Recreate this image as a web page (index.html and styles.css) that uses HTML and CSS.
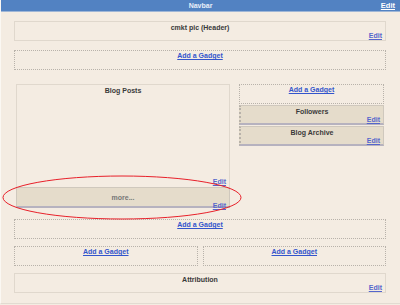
FILE: index.html
```html
<!DOCTYPE html>
<html>
<head>
<meta charset="utf-8">
<link rel="stylesheet" href="styles.css">
<title>Layout</title>
</head>
<body>
<div class="page">
  <div class="navbar"><span class="navtitle">Navbar</span><a class="navedit" href="#">Edit</a></div>
  <div class="main">
    <div class="widget header"><span class="wtitle">cmkt pic (Header)</span><a class="edit" href="#">Edit</a></div>
    <div class="add wide"><a href="#">Add a Gadget</a></div>
    <div class="cols">
      <div class="leftcol">
        <div class="widget posts"><span class="wtitle">Blog Posts</span><a class="edit" href="#">Edit</a></div>
        <div class="widget filled more"><span class="wtitle muted">more...</span><a class="edit" href="#">Edit</a></div>
      </div>
      <div class="rightcol">
        <div class="add"><a href="#">Add a Gadget</a></div>
        <div class="widget filled side"><span class="wtitle">Followers</span><a class="edit" href="#">Edit</a></div>
        <div class="widget filled side"><span class="wtitle">Blog Archive</span><a class="edit" href="#">Edit</a></div>
      </div>
    </div>
    <div class="add wide after"><a href="#">Add a Gadget</a></div>
    <div class="pair">
      <div class="add"><a href="#">Add a Gadget</a></div>
      <div class="add"><a href="#">Add a Gadget</a></div>
    </div>
    <div class="widget attrib"><span class="wtitle">Attribution</span><a class="edit" href="#">Edit</a></div>
  </div>
</div>
<svg class="circle" width="400" height="305" viewBox="0 0 400 305">
  <ellipse cx="122" cy="197.5" rx="119" ry="21.5" fill="none" stroke="#e8202a" stroke-width="1"/>
</svg>
</body>
</html>
```
FILE: styles.css
```css
body {
    margin: 0;
    background: #f4ece2;
    font-family: "Liberation Sans", Arial, sans-serif;
    font-size: 7px;
    font-weight: bold;
    color: #444;
}

a {
    color: #3355cc;
    text-decoration: underline;
}

.page {
    width: 399px;
    height: 303px;
    border-left: 1px solid #fbf8f3;
    border-bottom: 1px solid #e2dbd1;
    position: relative;
}

.navbar {
    height: 11px;
    background: #5282c2;
    border-bottom: 1px solid #9fb6d6;
    display: flex;
    align-items: center;
    justify-content: center;
    position: relative;
}

.navtitle {
    color: #e8eef8;
    line-height: 11px;
}

.navedit {
    position: absolute;
    right: 5px;
    top: 1px;
    color: #ffffff;
    font-size: 7.5px;
    line-height: 10px;
}

.main {
    padding: 9px 14px 0 13px;
    display: flex;
    flex-direction: column;
}

.widget {
    border: 1px solid #e0d8cd;
    display: flex;
    flex-direction: column;
    align-items: center;
    padding: 2px 3px 1px 3px;
    box-sizing: border-box;
}

.wtitle {
    line-height: 8px;
    color: #3a3a3a;
}

.muted {
    color: #777;
}

.edit {
    align-self: flex-end;
    margin-top: auto;
    line-height: 8px;
    color: #5566cc;
}

.header {
    height: 20px;
}

.add {
    border: 1px dotted #b8b2aa;
    height: 20px;
    box-sizing: border-box;
    display: flex;
    justify-content: center;
    padding-top: 1px;
    line-height: 8px;
}

.wide {
    margin-top: 9px;
}

.cols {
    display: flex;
    margin-top: 14px;
}

.leftcol {
    margin-left: 2px;
    width: 214px;
    display: flex;
    flex-direction: column;
}

.posts {
    height: 103px;
    border-bottom: none;
}

.filled {
    background: #e5dccb;
    border: 1px solid #cfc8bd;
    border-bottom: 2px solid #b6b2bf;
}

.more {
    height: 21px;
    padding-top: 6px;
}

.rightcol {
    margin-left: 9px;
    width: 145px;
    display: flex;
    flex-direction: column;
}

.side {
    height: 20px;
    margin-top: 1px;
    border-left: 2px dotted #b8b2aa;
}

.after {
    margin-top: 11px;
}

.pair {
    display: flex;
    gap: 5px;
    margin-top: 7px;
}

.pair .add {
    flex: 1;
}

.attrib {
    height: 20px;
    margin-top: 7px;
}

.circle {
    position: absolute;
    left: 0;
    top: 0;
}
```
